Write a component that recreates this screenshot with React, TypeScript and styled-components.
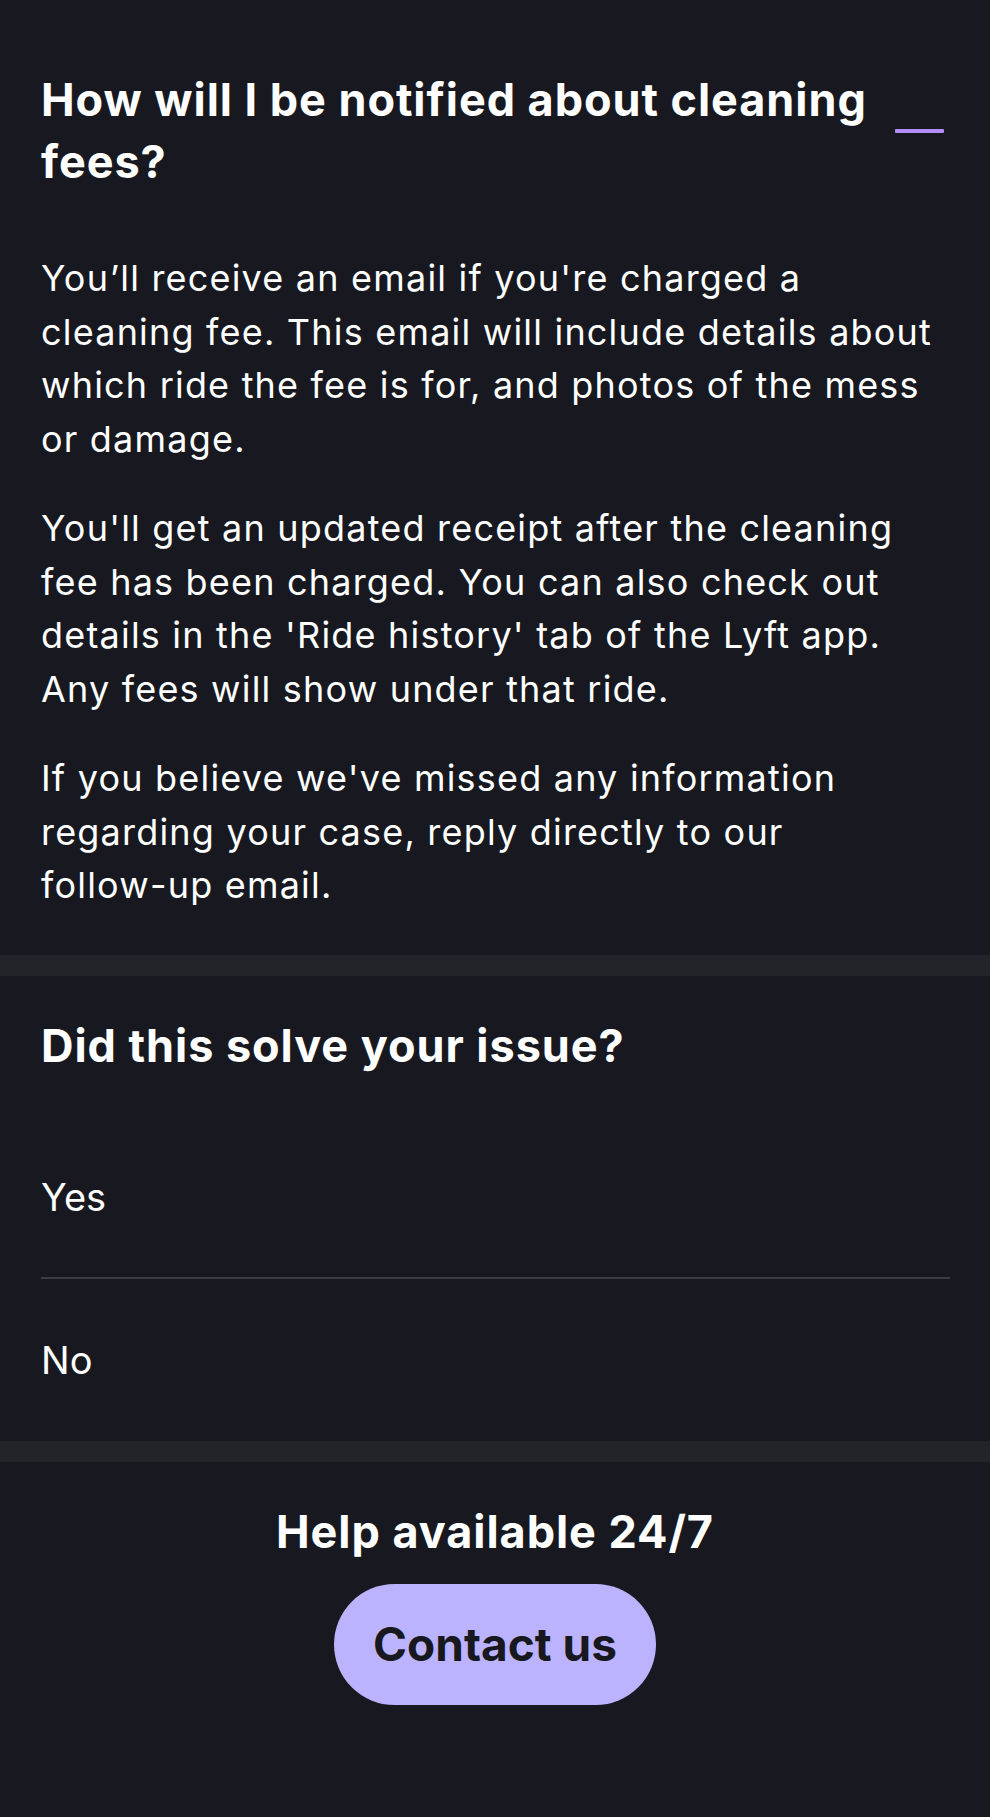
import React from "react";
import styled, { createGlobalStyle } from "styled-components";

const FONT = `Inter, "Noto Sans", sans-serif`;

const GlobalStyle = createGlobalStyle`
  html, body {
    margin: 0;
    padding: 0;
    background: #181920;
  }
  body {
    font-family: ${FONT};
    color: #ffffff;
    -webkit-font-smoothing: antialiased;
  }
`;

const Page = styled.div`
  width: 990px;
  min-height: 1817px;
  background: #181920;
  display: flex;
  flex-direction: column;
`;

const Section = styled.section<{ $top: number; $bottom: number }>`
  padding: ${(p) => p.$top}px 40px ${(p) => p.$bottom}px 41px;
`;

const Band = styled.div`
  height: 21px;
  background: #232429;
`;

const QuestionRow = styled.div`
  display: flex;
  align-items: center;
  gap: 16px;
`;

const Heading = styled.h2<{ $center?: boolean }>`
  margin: 0;
  font-family: ${FONT};
  font-weight: 700;
  font-size: 45px;
  line-height: 62px;
  letter-spacing: 0.95px;
  color: #ffffff;
  text-align: ${(p) => (p.$center ? "center" : "left")};
  flex: 1;
`;

const CollapseIcon = styled.span`
  width: 49px;
  height: 4px;
  margin-right: 6px;
  border-radius: 1px;
  background: #b48cf6;
  flex: none;
`;

const Answer = styled.div`
  margin-top: 59px;
  display: flex;
  flex-direction: column;
  gap: 36px;
`;

const Paragraph = styled.p`
  margin: 0;
  font-size: 36px;
  line-height: 53.5px;
  letter-spacing: 1.2px;
  font-weight: 400;
  color: #ffffff;
`;

const NoWrap = styled.span`
  white-space: nowrap;
`;

const Options = styled.div`
  margin-top: 40px;
  display: flex;
  flex-direction: column;
`;

const Option = styled.button<{ $divider?: boolean }>`
  height: 162px;
  display: flex;
  align-items: center;
  padding: 0;
  background: transparent;
  border: none;
  border-bottom: ${(p) => (p.$divider ? "2px solid #3b3c41" : "none")};
  font-family: ${FONT};
  font-size: 38px;
  color: #ffffff;
  text-align: left;
  cursor: pointer;
`;

const Footer = styled.div`
  padding: 39px 0 112px;
  display: flex;
  flex-direction: column;
  align-items: center;
  gap: 21px;
`;

const ContactButton = styled.button`
  width: 322px;
  height: 121px;
  border: none;
  border-radius: 61px;
  background: #bcb3ff;
  color: #18181f;
  font-family: ${FONT};
  font-weight: 700;
  font-size: 46px;
  cursor: pointer;
`;

export default function App() {
  return (
    <Page>
      <GlobalStyle />
      <Section $top={69} $bottom={42}>
        <QuestionRow>
          <Heading>How will I be notified about cleaning fees?</Heading>
          <CollapseIcon aria-label="Collapse" />
        </QuestionRow>
        <Answer>
          <Paragraph>
            You’ll receive an email if you're charged a cleaning fee. This email will include
            details about which ride the fee is for, and photos of the mess or damage.
          </Paragraph>
          <Paragraph>
            You'll get an updated receipt after the cleaning fee has been charged. You can also
            check out details in the 'Ride history' tab of the Lyft app. Any fees will show under
            that ride.
          </Paragraph>
          <Paragraph>
            If you believe we've missed any information regarding your case, reply directly to
            our <NoWrap>follow-up</NoWrap> email.
          </Paragraph>
        </Answer>
      </Section>
      <Band />
      <Section $top={39} $bottom={0}>
        <Heading>Did this solve your issue?</Heading>
        <Options>
          <Option $divider>Yes</Option>
          <Option>No</Option>
        </Options>
      </Section>
      <Band />
      <Footer>
        <Heading $center>Help available 24/7</Heading>
        <ContactButton>Contact us</ContactButton>
      </Footer>
    </Page>
  );
}
